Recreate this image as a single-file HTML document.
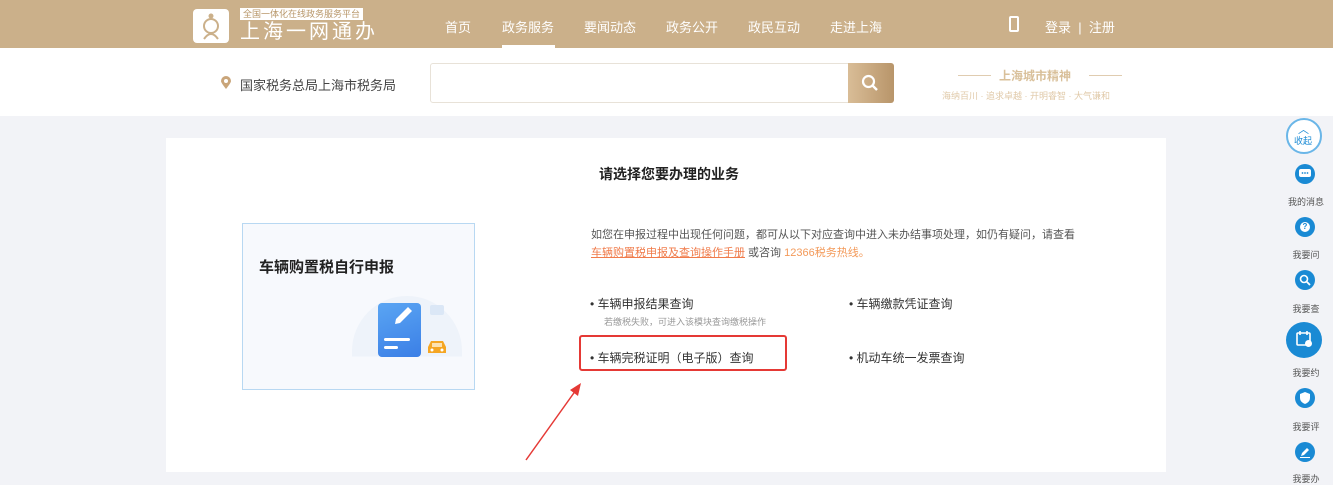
<!DOCTYPE html>
<html><head><meta charset="utf-8"><style>
*{margin:0;padding:0;box-sizing:border-box}
body{width:1333px;height:480px;overflow:hidden;background:#f2f3f7;font-family:"Liberation Sans","Noto Sans CJK SC",sans-serif;position:relative}
.hd{position:absolute;left:0;top:0;width:1333px;height:48px;background:#cbb08a}
.a{position:absolute;white-space:nowrap}
.nav{color:#fff;font-size:13px;top:17px}
.sr{position:absolute;left:0;top:48px;width:1333px;height:68px;background:#fff}
.panel{position:absolute;left:166px;top:138px;width:1000px;height:334px;background:#fff}
.sb{position:absolute;left:1286px;width:36px;height:36px;border-radius:50%;background:#1a8ad4}
.sbs{position:absolute;width:20px;height:20px;border-radius:50%;background:#1a8ad4;left:1295px}
.sl{position:absolute;font-size:9px;color:#555;left:1284px;width:44px;text-align:center}
.li{font-size:12px;color:#333}
.g{position:absolute}
</style></head><body>
<div class="hd"></div>
<div class="a" style="left:193px;top:9px;width:36px;height:34px;background:#fff;border-radius:4px"></div>
<svg class="a" style="left:196px;top:11px" width="30" height="30" viewBox="0 0 30 30"><circle cx="15" cy="15" r="7" fill="none" stroke="#cbb08a" stroke-width="2"/><circle cx="15" cy="5" r="2.5" fill="#cbb08a"/><path d="M8 28 Q15 18 22 28" fill="none" stroke="#cbb08a" stroke-width="2"/></svg>
<div class="a" style="left:240px;top:8px;background:#fff;color:#b8976a;font-size:9px;padding:0 3px;line-height:12px">全国一体化在线政务服务平台</div>
<div class="a" style="left:240px;top:21px;color:#fff;font-size:20px;letter-spacing:3px;line-height:22px">上海一网通办</div>
<div class="a nav" style="left:445px">首页</div>
<div class="a nav" style="left:502px">政务服务</div>
<div class="a" style="left:502px;top:45px;width:53px;height:3px;background:#fff"></div>
<div class="a nav" style="left:584px">要闻动态</div>
<div class="a nav" style="left:666px">政务公开</div>
<div class="a nav" style="left:748px">政民互动</div>
<div class="a nav" style="left:830px">走进上海</div>
<div class="a" style="left:1009px;top:16px;width:10px;height:16px;border:2px solid #fff;border-radius:2px"></div>
<div class="a nav" style="left:1045px">登录 &nbsp;|&nbsp; 注册</div>
<div class="sr"></div>
<svg class="a" style="left:221px;top:76px" width="10" height="13" viewBox="0 0 10 13"><path d="M5 13 C1 8 0 6 0 5 A5 5 0 0 1 10 5 C10 6 9 8 5 13Z" fill="#c9a57a"/><circle cx="5" cy="5" r="2" fill="#fff"/></svg>
<div class="a" style="left:240px;top:75px;font-size:13px;color:#444">国家税务总局上海市税务局</div>
<div class="a" style="left:430px;top:63px;width:420px;height:40px;border:1px solid #e8e2d8;border-radius:3px 0 0 3px"></div>
<div class="a" style="left:848px;top:63px;width:46px;height:40px;background:linear-gradient(90deg,#d9bd97,#b8956a);border-radius:0 3px 3px 0"></div>
<svg class="a" style="left:861px;top:74px" width="18" height="18" viewBox="0 0 18 18"><circle cx="7.5" cy="7.5" r="5.5" fill="none" stroke="#fff" stroke-width="2.2"/><path d="M11.5 11.5 L16 16" stroke="#fff" stroke-width="2.4"/></svg>
<div class="a" style="left:958px;top:75px;width:33px;height:1px;background:#e0ccb0"></div>
<div class="a" style="left:1089px;top:75px;width:33px;height:1px;background:#e0ccb0"></div>
<div class="a" style="left:999px;top:67px;font-size:12px;color:#d9c09a;font-weight:bold">上海城市精神</div>
<div class="a" style="left:942px;top:89px;font-size:9px;color:#e0c9a8">海纳百川 · 追求卓越 · 开明睿智 · 大气谦和</div>
<div class="panel"></div>
<div class="a" style="left:599px;top:164px;font-size:14px;color:#222;font-weight:bold">请选择您要办理的业务</div>
<div class="a" style="left:242px;top:223px;width:233px;height:167px;background:#f7f9fd;border:1px solid #b8d8f2"></div>
<div class="a" style="left:259px;top:256px;font-size:15px;color:#222;font-weight:bold">车辆购置税自行申报</div>
<div class="a" style="left:352px;top:296px;width:110px;height:110px;border-radius:55px 55px 0 0;background:#eef3fa;clip-path:inset(0 0 45% 0)"></div>
<div class="a" style="left:430px;top:305px;width:14px;height:10px;background:#dbe7f6;border-radius:2px"></div>
<div class="a" style="left:378px;top:303px;width:43px;height:54px;background:linear-gradient(160deg,#5aa5f3,#3b7fe6);border-radius:4px"></div>
<div class="a" style="left:384px;top:338px;width:26px;height:3px;background:#fff;border-radius:2px"></div>
<div class="a" style="left:384px;top:346px;width:14px;height:3px;background:#fff;border-radius:2px"></div>
<svg class="a" style="left:392px;top:305px" width="22" height="24" viewBox="0 0 22 24"><path d="M16 2 L20 6 L8 18 L3 19 L4 14Z" fill="#fff"/></svg>
<svg class="a" style="left:426px;top:339px" width="22" height="17" viewBox="0 0 22 17"><path d="M5 2 H17 L20 8 V14 H2 V8Z" fill="#f5a623"/><rect x="6" y="4" width="10" height="4" fill="#fde2b0"/><circle cx="6" cy="11" r="1.5" fill="#fff"/><circle cx="16" cy="11" r="1.5" fill="#fff"/></svg>
<div class="a" style="left:591px;top:226px;font-size:11px;color:#555">如您在申报过程中出现任何问题，都可从以下对应查询中进入未办结事项处理，如仍有疑问，请查看</div>
<div class="a" style="left:591px;top:244px;font-size:11px;color:#555"><span style="color:#f07b4a;text-decoration:underline">车辆购置税申报及查询操作手册</span> 或咨询 <span style="color:#f39a5a">12366税务热线。</span></div>
<div class="a li" style="left:590px;top:295px">• 车辆申报结果查询</div>
<div class="a" style="left:604px;top:315px;font-size:9px;color:#999">若缴税失败，可进入该模块查询缴税操作</div>
<div class="a li" style="left:849px;top:295px">• 车辆缴款凭证查询</div>
<div class="a li" style="left:590px;top:349px">• 车辆完税证明（电子版）查询</div>
<div class="a li" style="left:849px;top:349px">• 机动车统一发票查询</div>
<div class="a" style="left:579px;top:335px;width:208px;height:36px;border:2px solid #e53935;border-radius:3px"></div>
<svg class="a" style="left:520px;top:380px" width="70" height="85" viewBox="0 0 70 85"><path d="M6 80 L56 10" stroke="#e53935" stroke-width="1.5"/><path d="M61 3 L50 10 L58 16Z" fill="#e53935"/></svg>
<div class="a" style="left:1286px;top:118px;width:36px;height:36px;border-radius:50%;border:2px solid #6ab6e8;background:#fff"></div>
<div class="a" style="left:1298px;top:121px;font-size:11px;color:#1a8ad4">︿</div>
<div class="a" style="left:1294px;top:134px;font-size:9px;color:#1a8ad4">收起</div>
<div class="sbs" style="top:164px"></div><div class="sl" style="top:195px">我的消息</div>
<svg class="g" style="left:1299px;top:169px" width="12" height="10" viewBox="0 0 12 10"><rect x="0" y="0" width="12" height="8" rx="2" fill="#fff"/><circle cx="3.5" cy="4" r="0.9" fill="#1a8ad4"/><circle cx="6" cy="4" r="0.9" fill="#1a8ad4"/><circle cx="8.5" cy="4" r="0.9" fill="#1a8ad4"/></svg>
<div class="sbs" style="top:217px"></div><div class="sl" style="top:248px">我要问</div>
<div class="g" style="left:1300px;top:222px;width:10px;height:10px;border-radius:50%;background:#fff;color:#1a8ad4;font-size:8px;line-height:10px;text-align:center;font-weight:bold">?</div>
<div class="sbs" style="top:270px"></div><div class="sl" style="top:302px">我要查</div>
<svg class="g" style="left:1299px;top:274px" width="12" height="12" viewBox="0 0 12 12"><circle cx="5" cy="5" r="3.5" fill="none" stroke="#fff" stroke-width="1.6"/><path d="M7.5 7.5 L11 11" stroke="#fff" stroke-width="1.8"/></svg>
<div class="sb" style="top:322px"></div><div class="sl" style="top:366px">我要约</div>
<svg class="g" style="left:1296px;top:331px" width="17" height="17" viewBox="0 0 17 17"><rect x="1" y="2" width="13" height="12" rx="1" fill="none" stroke="#fff" stroke-width="1.6"/><path d="M4 0V4M11 0V4" stroke="#fff" stroke-width="1.6"/><circle cx="12.5" cy="12.5" r="3.5" fill="#fff"/></svg>
<div class="sbs" style="top:388px"></div><div class="sl" style="top:420px">我要评</div>
<svg class="g" style="left:1299px;top:392px" width="12" height="12" viewBox="0 0 12 12"><path d="M1 2 L6 0 L11 2 V6 Q11 10 6 12 Q1 10 1 6Z" fill="#fff"/></svg>
<div class="sbs" style="top:442px"></div><div class="sl" style="top:472px">我要办</div>
<svg class="g" style="left:1299px;top:446px" width="12" height="12" viewBox="0 0 12 12"><path d="M2 10 L3 7 L8 2 L10 4 L5 9Z" fill="#fff"/><path d="M1 11.5H11" stroke="#fff"/></svg>
</body></html>
